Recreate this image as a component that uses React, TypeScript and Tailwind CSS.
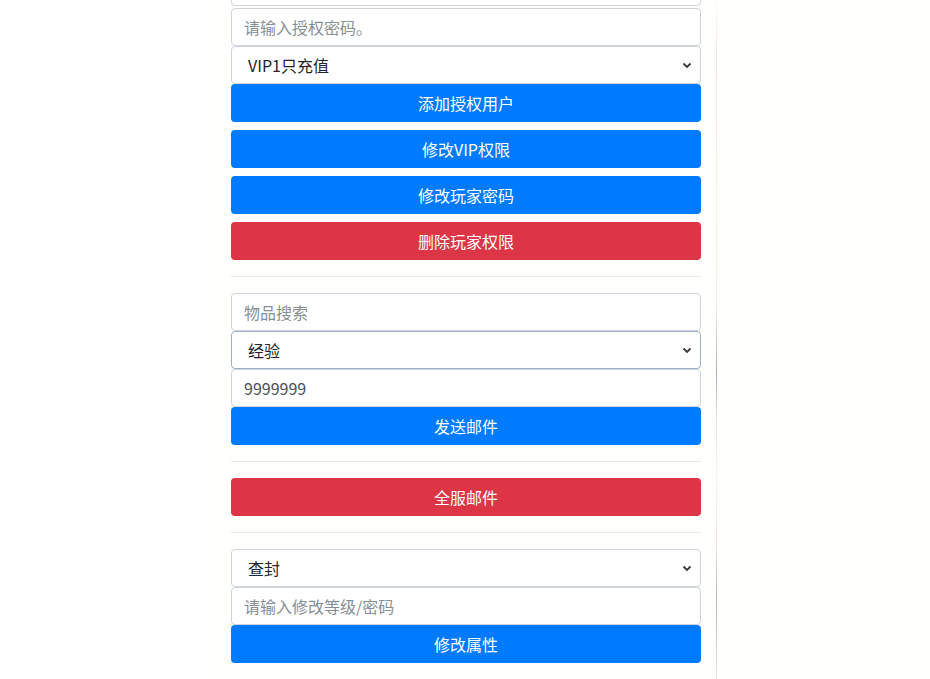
import React from "react";

const font = "font-['Microsoft_YaHei','Noto_Sans_CJK_SC',sans-serif]";

function Input({ placeholder, value }: { placeholder?: string; value?: string }) {
  return (
    <input
      readOnly
      value={value}
      placeholder={placeholder}
      className={`block h-[38px] w-full rounded border border-[#ced4da] bg-white px-3 pb-px text-base text-[#495057] outline-none placeholder:text-[#868e96] ${font}`}
    />
  );
}

function Select({ label, focus }: { label: string; focus?: boolean }) {
  return (
    <div
      className={`flex h-[38px] w-full items-center justify-between rounded border bg-white pb-px pl-4 pr-2 text-base text-[#212529] ${font} ${
        focus ? "border-[#9ab0c8]" : "border-[#ced4da]"
      }`}
    >
      <span>{label}</span>
      <svg width="10" height="8" viewBox="0 0 10 8" fill="none">
        <path d="M1.5 2.5 L5 6 L8.5 2.5" stroke="#343a40" strokeWidth="1.8" />
      </svg>
    </div>
  );
}

function Btn({ label, danger }: { label: string; danger?: boolean }) {
  return (
    <button
      className={`block h-[38px] w-full rounded pb-px text-base text-white ${font} ${
        danger ? "bg-[#dc3545]" : "bg-[#007bff]"
      }`}
    >
      {label}
    </button>
  );
}

function Hr() {
  return <div className="my-4 h-px bg-[#e8e8e8]" />;
}

export default function App() {
  return (
    <div className="flex h-[679px] w-[930px] overflow-hidden bg-white">
      <div className="w-[215px]" />
      <div className="w-[501px] bg-[#fffffd] pl-4 pr-[15px]">
        <div className="mt-[-32px] flex flex-col">
          <Input placeholder="" />
          <div className="h-[2px]" />
          <Input placeholder="请输入授权密码。" />
          <Select label="VIP1只充值" />
          <div className="flex flex-col gap-2">
            <Btn label="添加授权用户" />
            <Btn label="修改VIP权限" />
            <Btn label="修改玩家密码" />
            <Btn label="删除玩家权限" danger />
          </div>
          <Hr />
          <Input placeholder="物品搜索" />
          <Select label="经验" focus />
          <Input value="9999999" />
          <Btn label="发送邮件" />
          <Hr />
          <Btn label="全服邮件" danger />
          <Hr />
          <Select label="查封" />
          <Input placeholder="请输入修改等级/密码" />
          <Btn label="修改属性" />
          <Hr />
        </div>
      </div>
      <div className="w-px bg-[linear-gradient(to_bottom,#fdfaf4_0%,#f7e6e2_8%,#f7ece4_18%,#f9f4df_30%,#f2efe4_45%,#a9abb5_55%,#e6e6ea_62%,#faf4ea_70%,#f1e4e4_80%,#b2b4bf_88%,#e6e7ec_100%)]" />
      <div className="flex-1 bg-[#fffffb]" />
    </div>
  );
}
